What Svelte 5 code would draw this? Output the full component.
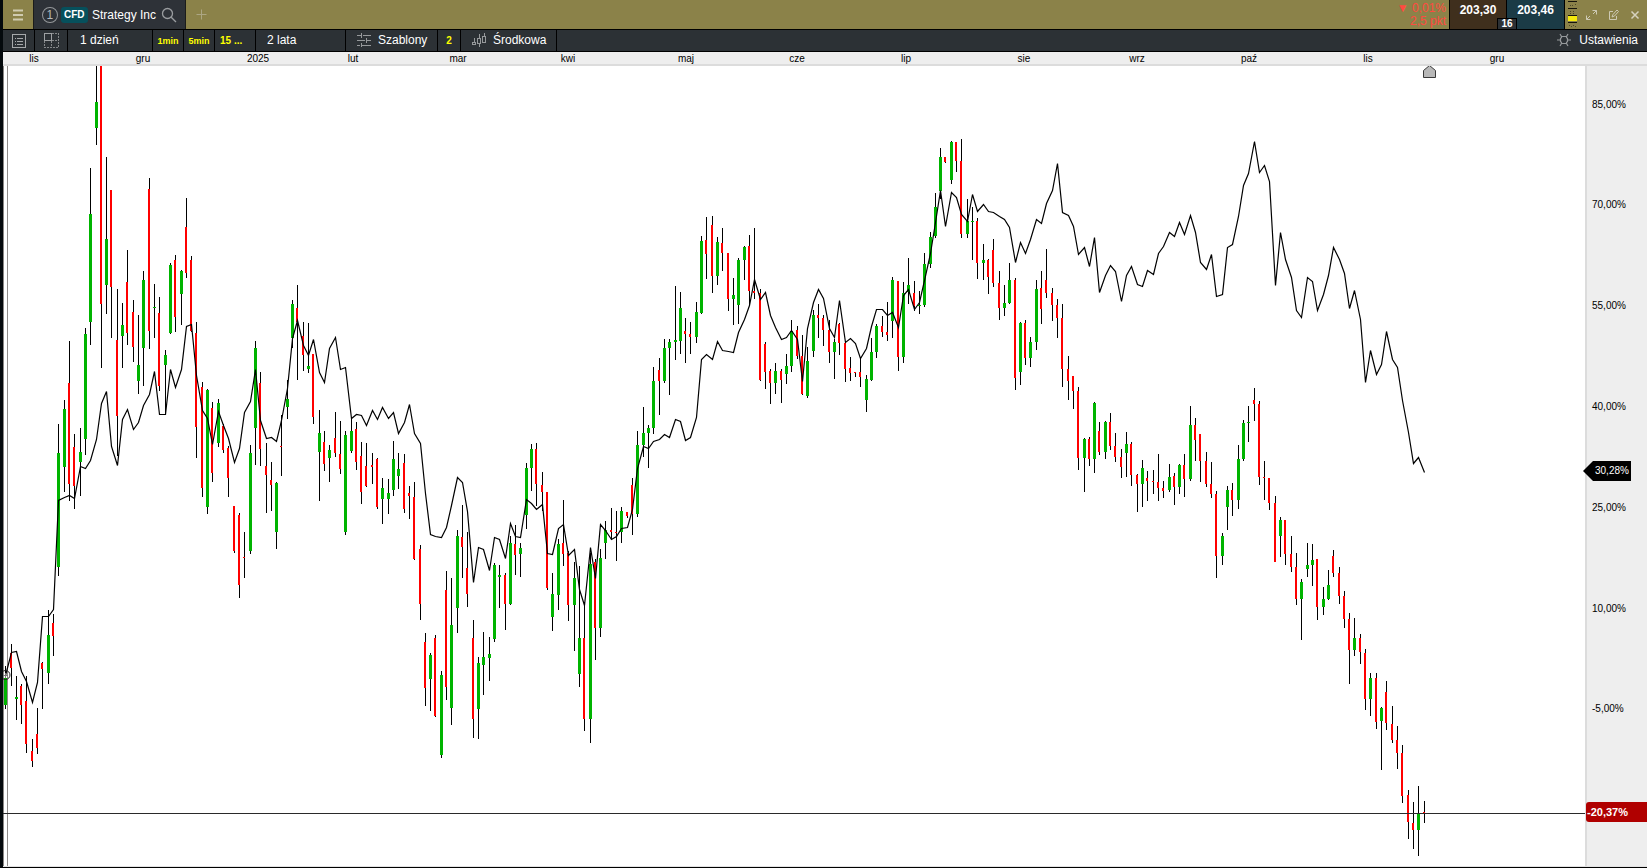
<script>
    // one row per session: high, low, body top, body bottom, rising, compare line
    const sessions = [
        [666, 709, 678, 705, 1, 675], [644, 686, 653, 668, 0, 652], [676, 720, 697, 699, 1, 651],
        [684, 724, 686, 705, 0, 671], [676, 753, 701, 744, 0, 681], [739, 767, 751, 761, 0, 702],
        [708, 754, 734, 748, 0, 682], [662, 709, 663, 669, 0, 616], [610, 684, 635, 673, 1, 616],
        [614, 656, 623, 636, 0, 609], [424, 576, 453, 567, 1, 500], [400, 492, 409, 467, 1, 497],
        [341, 501, 383, 484, 0, 495], [434, 509, 447, 486, 0, 498], [428, 496, 452, 462, 1, 466],
        [328, 455, 334, 439, 1, 468], [168, 345, 214, 322, 1, 460], [65, 145, 102, 128, 1, 439],
        [65, 368, 65, 304, 0, 403], [157, 314, 239, 285, 1, 391], [190, 338, 190, 287, 0, 446],
        [289, 456, 340, 416, 0, 465], [303, 368, 325, 336, 1, 419], [250, 345, 282, 333, 0, 409],
        [300, 362, 312, 347, 0, 429], [315, 394, 365, 381, 1, 422], [271, 386, 280, 348, 1, 405],
        [178, 349, 189, 331, 0, 394], [284, 338, 307, 308, 1, 371], [297, 391, 313, 386, 0, 414],
        [350, 414, 355, 365, 1, 414], [263, 334, 265, 333, 1, 369], [255, 332, 260, 317, 0, 387],
        [270, 325, 271, 294, 1, 369], [198, 278, 227, 273, 0, 326], [256, 332, 260, 331, 0, 324],
        [322, 458, 333, 427, 0, 375], [382, 497, 387, 488, 0, 410], [389, 514, 390, 507, 1, 418],
        [402, 482, 408, 473, 0, 444], [399, 447, 403, 443, 1, 411], [424, 453, 426, 450, 0, 425],
        [446, 497, 448, 478, 0, 438], [506, 553, 506, 551, 0, 462], [513, 598, 515, 585, 0, 448],
        [532, 578, 557, 558, 0, 412], [445, 554, 453, 551, 1, 401], [341, 465, 348, 428, 1, 369],
        [372, 466, 383, 449, 0, 420], [443, 513, 466, 475, 0, 438], [462, 511, 480, 485, 0, 437],
        [482, 549, 483, 532, 1, 441], [415, 476, 446, 447, 0, 420], [380, 419, 399, 407, 1, 388],
        [300, 348, 304, 338, 1, 338], [285, 380, 308, 322, 0, 320], [322, 371, 336, 355, 0, 345],
        [323, 373, 366, 369, 1, 355], [354, 424, 354, 417, 0, 339], [410, 501, 433, 452, 1, 372],
        [431, 471, 442, 464, 0, 382], [445, 482, 450, 458, 1, 348], [412, 457, 438, 453, 0, 337],
        [421, 474, 454, 469, 0, 369], [431, 535, 435, 532, 1, 367], [418, 453, 431, 451, 1, 418],
        [422, 470, 429, 462, 0, 414], [442, 504, 456, 492, 0, 415], [443, 487, 466, 486, 0, 425],
        [453, 484, 465, 467, 0, 410], [458, 509, 459, 507, 0, 419], [478, 524, 488, 499, 1, 407],
        [479, 514, 493, 499, 1, 418], [441, 496, 459, 490, 1, 412], [453, 489, 469, 476, 1, 433],
        [454, 513, 463, 509, 0, 422], [486, 519, 493, 496, 0, 404], [482, 560, 497, 559, 0, 433],
        [545, 620, 549, 604, 0, 443], [633, 706, 642, 688, 0, 493], [653, 711, 655, 679, 1, 534],
        [635, 717, 638, 716, 0, 536], [671, 758, 675, 755, 1, 537], [571, 700, 590, 687, 0, 527],
        [578, 725, 625, 708, 1, 505], [530, 633, 536, 608, 1, 477], [505, 578, 537, 547, 0, 482],
        [532, 607, 568, 594, 0, 511], [620, 738, 638, 719, 0, 582], [657, 739, 663, 709, 1, 547],
        [632, 695, 657, 665, 1, 549], [637, 681, 654, 658, 1, 570], [563, 642, 565, 639, 1, 537],
        [565, 608, 575, 577, 1, 539], [573, 630, 575, 604, 0, 558], [536, 605, 543, 604, 1, 523],
        [525, 575, 544, 555, 0, 536], [543, 577, 548, 554, 1, 537], [463, 529, 468, 515, 1, 499],
        [444, 491, 449, 468, 1, 503], [443, 506, 449, 484, 0, 509], [472, 511, 485, 492, 0, 504],
        [492, 590, 492, 588, 0, 553], [573, 631, 594, 617, 1, 554], [539, 610, 544, 595, 1, 528],
        [500, 566, 543, 554, 0, 524], [551, 621, 553, 605, 0, 555], [562, 651, 578, 605, 1, 549],
        [566, 687, 638, 674, 1, 589], [603, 731, 638, 719, 0, 605], [553, 743, 564, 719, 1, 547],
        [559, 660, 562, 628, 0, 578], [549, 637, 558, 628, 1, 524], [521, 559, 530, 543, 1, 530],
        [508, 540, 530, 532, 0, 539], [511, 561, 532, 533, 0, 536], [507, 543, 511, 532, 1, 528],
        [512, 518, 512, 516, 0, 527], [478, 535, 485, 514, 0, 509], [431, 517, 445, 514, 1, 468],
        [407, 457, 433, 445, 1, 446], [425, 468, 428, 433, 1, 448], [367, 434, 381, 428, 1, 441],
        [358, 415, 370, 381, 0, 439], [339, 383, 348, 381, 1, 434], [339, 395, 342, 348, 1, 437],
        [286, 360, 340, 342, 1, 419], [292, 354, 308, 341, 1, 421], [318, 363, 331, 334, 0, 440],
        [322, 354, 334, 337, 0, 437], [302, 343, 312, 337, 1, 417], [236, 314, 241, 313, 1, 359],
        [217, 279, 240, 254, 0, 354], [216, 293, 225, 276, 0, 359], [237, 285, 242, 276, 1, 341],
        [228, 271, 243, 253, 0, 350], [253, 311, 253, 299, 0, 351], [278, 325, 295, 299, 1, 352],
        [258, 324, 260, 305, 1, 332], [246, 280, 247, 260, 1, 319], [235, 306, 246, 291, 0, 305],
        [228, 299, 291, 293, 0, 279], [289, 381, 293, 380, 0, 299], [342, 389, 344, 372, 0, 292],
        [369, 404, 371, 383, 0, 315], [363, 394, 371, 383, 1, 327], [369, 403, 371, 380, 0, 339],
        [354, 384, 366, 374, 1, 337], [320, 372, 331, 366, 1, 330], [326, 359, 330, 356, 0, 339],
        [335, 395, 356, 394, 0, 381], [347, 398, 361, 396, 1, 328], [310, 357, 315, 351, 1, 302],
        [304, 338, 315, 318, 0, 289], [315, 346, 318, 330, 0, 298], [320, 363, 330, 352, 0, 328],
        [339, 379, 342, 352, 1, 337], [323, 355, 324, 343, 0, 300], [343, 382, 343, 369, 0, 342],
        [357, 381, 368, 373, 0, 338], [372, 377, 372, 373, 0, 343], [358, 387, 372, 377, 0, 358],
        [375, 412, 379, 400, 1, 348], [338, 381, 352, 380, 1, 326], [324, 358, 326, 352, 1, 309],
        [316, 337, 326, 332, 0, 309], [302, 341, 332, 335, 0, 315], [277, 338, 280, 321, 1, 312],
        [281, 371, 281, 357, 0, 327], [282, 363, 293, 357, 1, 295], [258, 304, 285, 292, 1, 289],
        [281, 311, 293, 306, 0, 309], [291, 314, 305, 306, 1, 302], [253, 307, 264, 305, 1, 280],
        [232, 268, 237, 264, 1, 253], [193, 238, 207, 236, 1, 222], [148, 199, 157, 191, 1, 190],
        [157, 163, 157, 162, 0, 226], [141, 184, 142, 180, 1, 192], [142, 172, 142, 161, 0, 197],
        [139, 238, 161, 234, 0, 214], [199, 238, 221, 234, 1, 221], [207, 260, 221, 222, 1, 194],
        [218, 279, 221, 263, 0, 211], [244, 280, 260, 263, 1, 204], [259, 294, 260, 277, 0, 211],
        [239, 287, 250, 283, 0, 212], [271, 320, 283, 308, 0, 216], [285, 316, 303, 308, 1, 219],
        [263, 304, 280, 303, 1, 227], [278, 390, 280, 378, 0, 262], [322, 385, 323, 372, 1, 242],
        [320, 365, 323, 358, 0, 253], [337, 367, 342, 358, 1, 239], [280, 350, 289, 342, 1, 219],
        [271, 324, 288, 309, 0, 223], [249, 298, 280, 293, 0, 203], [288, 321, 293, 305, 0, 190],
        [299, 338, 305, 318, 0, 163], [304, 387, 318, 369, 0, 212], [356, 400, 369, 381, 0, 215],
        [376, 409, 376, 391, 0, 226], [387, 470, 391, 458, 0, 254], [438, 492, 439, 458, 1, 247],
        [437, 466, 439, 459, 0, 266], [402, 473, 403, 459, 1, 237], [422, 455, 431, 452, 0, 292],
        [421, 459, 422, 452, 1, 275], [413, 450, 422, 446, 0, 265], [433, 462, 446, 457, 0, 271],
        [449, 478, 457, 467, 0, 301], [432, 477, 444, 453, 1, 275], [442, 486, 444, 475, 0, 266],
        [474, 512, 475, 484, 0, 284], [460, 507, 468, 484, 1, 286], [471, 501, 478, 481, 0, 270],
        [470, 494, 481, 482, 0, 274], [454, 501, 482, 488, 0, 253], [481, 498, 488, 491, 0, 246],
        [464, 492, 477, 490, 1, 232], [473, 505, 476, 487, 0, 236], [464, 494, 465, 487, 1, 222],
        [454, 497, 465, 479, 0, 234], [406, 481, 425, 479, 1, 215], [418, 461, 425, 440, 0, 232],
        [434, 482, 434, 461, 0, 262], [452, 487, 461, 484, 0, 269], [462, 498, 484, 494, 0, 254],
        [491, 578, 494, 556, 0, 296], [533, 565, 536, 556, 1, 294], [486, 530, 490, 507, 1, 247],
        [483, 516, 490, 500, 0, 244], [445, 509, 459, 500, 1, 216], [420, 461, 423, 459, 1, 185],
        [406, 442, 422, 423, 1, 173], [388, 421, 400, 404, 0, 141], [401, 485, 404, 477, 0, 172],
        [461, 500, 477, 478, 0, 165], [478, 510, 478, 503, 0, 181], [496, 562, 503, 562, 0, 285],
        [517, 557, 520, 536, 1, 232], [520, 565, 520, 554, 0, 259], [536, 572, 554, 567, 0, 277],
        [553, 605, 567, 599, 0, 310], [579, 640, 582, 599, 1, 317], [543, 577, 565, 569, 1, 277],
        [544, 586, 560, 565, 1, 281], [559, 620, 559, 607, 0, 310], [587, 615, 599, 607, 1, 294],
        [570, 600, 585, 599, 1, 275], [550, 577, 556, 573, 0, 247], [567, 604, 573, 596, 0, 259],
        [591, 628, 596, 619, 0, 273], [613, 684, 619, 650, 0, 308], [618, 656, 638, 650, 1, 290],
        [634, 664, 638, 652, 0, 319], [649, 710, 653, 699, 0, 382], [673, 716, 678, 699, 1, 350],
        [673, 729, 678, 722, 0, 374], [707, 770, 708, 721, 1, 364], [681, 730, 692, 723, 0, 331],
        [706, 743, 724, 740, 0, 359], [726, 769, 740, 753, 0, 367], [745, 803, 753, 796, 0, 400],
        [790, 839, 795, 822, 0, 432], [802, 849, 823, 830, 0, 463], [786, 856, 814, 830, 1, 457],
        [801, 823, 812, 814, 0, 472],
    ];

    const LEFT = 3;
    const TOP = 66;
    const PLOT_WIDTH = 1582;
    const PLOT_HEIGHT = 800;
    const AXIS_WIDTH = 1644;

    const months = [
        ["lis", 34], ["gru", 143], ["2025", 258], ["lut", 353], ["mar", 458],
        ["kwi", 568], ["maj", 686], ["cze", 797], ["lip", 906], ["sie", 1024],
        ["wrz", 1137], ["paź", 1249], ["lis", 1368], ["gru", 1497],
    ];

    const levels = [
        ["85,00%", 105], ["70,00%", 205], ["55,00%", 306], ["40,00%", 407],
        ["25,00%", 508], ["10,00%", 609], ["-5,00%", 709],
    ];

    let interval = $state("1 dzień");
    let range = $state("2 lata");

    const sessionX = (i) => Math.floor(5.725 + i * 5.312);
    const timePct = (x) => ((x - LEFT) / AXIS_WIDTH) * 100;
    const levelPct = (y) => ((y - TOP) / PLOT_HEIGHT) * 100;

    const compareLine = sessions
        .map((s, i) => `${sessionX(i) + 0.5},${s[5] + 0.5}`)
        .join(" ");
</script>

<div class="window">
    <header class="titlebar">
        <button class="menu" aria-label="Menu">
            <svg width="12" height="12" viewBox="0 0 12 12">
                <path d="M1 1.5h10M1 6h10M1 10.5h10" stroke="#d0cbb0" stroke-width="2" />
            </svg>
        </button>
        <div class="tab">
            <span class="tab-number">1</span>
            <span class="cfd">CFD</span>
            <span class="symbol">Strategy Inc</span>
            <button class="plain" aria-label="Szukaj">
                <svg width="16" height="16" viewBox="0 0 16 16" fill="none" stroke="#9a9da0" stroke-width="1.3">
                    <circle cx="6.5" cy="6.5" r="5" />
                    <path d="M10.2 10.2L15 15" />
                </svg>
            </button>
        </div>
        <button class="plain add" aria-label="Dodaj">
            <svg width="11" height="11" viewBox="0 0 11 11">
                <path d="M5.5 0.5v10M0.5 5.5h10" stroke="#aca683" />
            </svg>
        </button>
        <div class="change">
            <span>▼ 0,01%</span>
            <span>2,5 pkt</span>
        </div>
        <div class="quotes">
            <button class="quote sell">203,30</button>
            <button class="quote buy">203,46</button>
            <span class="spread">16</span>
        </div>
        <svg class="depth" width="13" height="29" viewBox="0 0 13 29" shape-rendering="crispEdges">
            <path d="M3 1.5h9M3 8.5h9M3 15.5h9M3 22.5h9" stroke="#15140c" />
            <rect x="3" y="16" width="9" height="5" fill="#f4e80c" />
            <path d="M5 5.5h1M7 5.5h1M10 4.5h1M5 11.5h1M8 11.5h1M5 13.5h1M8 13.5h1M4 25.5h1M6 26.5h1M8 25.5h1M10 26.5h1" stroke="#4c4829" />
        </svg>
        <div class="window-actions">
            <button class="plain" aria-label="Powiększ">
                <svg width="12" height="12" viewBox="0 0 12 12" fill="none" stroke="#cdc9b3">
                    <path d="M6.5 1.5h4v4M4.5 10.5h-4v-4M10.5 1.5L7 5M0.5 10.5L4 7" />
                </svg>
            </button>
            <button class="plain" aria-label="Otwórz w nowym oknie">
                <svg width="12" height="12" viewBox="0 0 12 12" fill="none" stroke="#cdc9b3">
                    <path d="M5 2.5H1.5v8h7V7M4 8l1-2.5L9 1l1.5 1.500L6.500 7z" />
                </svg>
            </button>
            <button class="plain" aria-label="Zamknij">
                <svg width="10" height="10" viewBox="0 0 10 10">
                    <path d="M1.5 1.5l7 7M8.5 1.5l-7 7" stroke="#d6d2be" stroke-width="1.5" />
                </svg>
            </button>
        </div>
    </header>

    <nav class="toolbar">
        <button class="cell icon-first" aria-label="Lista">
            <svg width="14" height="14" viewBox="0 0 14 14" fill="none" stroke="#a5a8aa" shape-rendering="crispEdges">
                <rect x="0.5" y="0.5" width="13" height="13" />
                <path d="M3 4.5h1M5 4.5h6M3 7.5h1M5 7.5h6M3 10.5h1M5 10.5h6" />
            </svg>
        </button>
        <button class="cell icon-cell" aria-label="Układ">
            <svg width="15" height="15" viewBox="0 0 15 15" fill="none" stroke="#85888a" shape-rendering="crispEdges">
                <rect x="0.5" y="0.5" width="7" height="7" stroke="#9ea1a3" />
                <path d="M8 0.5h7M14.5 0v15M0.5 8v7M0 14.5h15M7.5 8v7M8 7.5h7" stroke-dasharray="2 1" />
            </svg>
        </button>
        <select class="cell select-interval" aria-label="Interwał" bind:value={interval}>
            <option>1 dzień</option>
            <option>1 tydzień</option>
        </select>
        <button class="cell quick">1min</button>
        <button class="cell quick">5min</button>
        <button class="cell quick quick-more">15 ...</button>
        <select class="cell select-range" aria-label="Zakres" bind:value={range}>
            <option>2 lata</option>
            <option>5 lat</option>
        </select>
        <button class="cell templates">
            <svg width="14" height="14" viewBox="0 0 14 14" fill="none" stroke="#96999b" shape-rendering="crispEdges">
                <path d="M0 2.5h4M6 2.5h8M0 7.5h8M10 7.5h4M0 12.5h3M5 12.5h9M4.5 0v5M9.5 5v5M4.5 10v4" />
            </svg>
            Szablony
        </button>
        <button class="cell quick count">2</button>
        <button class="cell middle">
            <svg width="15" height="14" viewBox="0 0 15 14" fill="none" stroke="#96999b" shape-rendering="crispEdges">
                <path d="M2.5 5v4M7.5 1v4M7.5 11v3M12.5 0v3M12.5 9v1" />
                <rect x="0.5" y="9.5" width="3" height="2" />
                <rect x="5.5" y="5.5" width="3" height="5" />
                <rect x="10.5" y="3.5" width="3" height="6" />
            </svg>
            Środkowa
        </button>
        <button class="cell settings">
            <svg width="14" height="14" viewBox="0 0 14 14" fill="none" stroke="#96999b" stroke-width="1.2">
                <path d="M4.5 3.500h5v1l1 1v3l-1 1v1h-5v-1l-1-1v-3l1-1z" />
                <path d="M4.5 3.500L3 1M9.5 3.500L11 1M4.5 10.500L3 13M9.5 10.500L11 13M3.5 7H0M10.5 7H14" />
            </svg>
            Ustawienia
        </button>
    </nav>

    <svg class="time-axis" width="100%" height="12">
        {#each months as [name, x]}
            <text x="{timePct(x)}%" y="10" text-anchor="middle">{name}</text>
        {/each}
    </svg>

    <main class="chart">
        <svg
            class="plot"
            viewBox="{LEFT} {TOP} {PLOT_WIDTH} {PLOT_HEIGHT}"
            preserveAspectRatio="none"
        >
            <g shape-rendering="crispEdges">
                <rect x="3" y="66" width="1" height="800" fill="#8a8785" />
                <rect x="7" y="66" width="1" height="800" fill="#8f8b89" />
                {#each sessions as [high, low, top, bottom, rising], i}
                    <rect x={sessionX(i)} y={high} width="1" height={low - high} />
                    <rect
                        x={sessionX(i) - 1}
                        y={top}
                        width={rising ? 3 : 2}
                        height={bottom - top}
                        fill={rising ? "#00b400" : "#ff0000"}
                    />
                {/each}
                <rect x="3" y="813" width="1582" height="1" fill="#2a2a2a" />
            </g>
            <polyline points={compareLine} fill="none" stroke="#000" stroke-width="1.2" />
            <g fill="none" stroke="#222">
                <circle cx="5.5" cy="675" r="4.5" />
                <path d="M5.5 673v5M3 675.5h5" stroke="#777" />
            </g>
            <path d="M1423.5 77.5v-7l6-5 6 5v7z" fill="#b8b8b8" stroke="#3a3a3a" />
        </svg>
        <div class="price-axis">
            <svg class="levels">
                {#each levels as [label, y]}
                    <text x="5" y="{levelPct(y)}%" dy="3">{label}</text>
                {/each}
            </svg>
            <span class="tag compare" style="top: {levelPct(471)}%">30,28%</span>
            <span class="tag last" style="top: {levelPct(812)}%">-20,37%</span>
        </div>
    </main>
</div>

<style>
    :global(body) {
        margin: 0;
    }

    .window {
        display: flex;
        flex-direction: column;
        box-sizing: border-box;
        height: 100vh;
        border-left: 3px solid #04090c;
        border-bottom: 1px solid #000;
        background: #fff;
        font-family: "Liberation Sans", Arial, sans-serif;
        font-size: 12px;
        color: #fff;
    }

    button,
    select {
        margin: 0;
        padding: 0;
        border: none;
        border-radius: 0;
        background: none;
        font: inherit;
        color: inherit;
        cursor: pointer;
    }

    select {
        appearance: none;
    }

    svg {
        display: block;
        flex: none;
    }

    .titlebar {
        display: flex;
        height: 29px;
        background: #8b8249;
        border-bottom: 1px solid #000;
    }

    .menu {
        display: flex;
        align-items: center;
        justify-content: center;
        width: 30px;
    }

    .tab {
        display: flex;
        align-items: center;
        box-sizing: border-box;
        width: 153px;
        padding: 0 8px;
        background: #2e3238;
        border-left: 1px solid #1b1c1a;
        border-right: 1px solid #1b1c1a;
    }

    .tab-number {
        box-sizing: border-box;
        width: 16px;
        height: 16px;
        border: 1px solid #94979a;
        border-radius: 50%;
        line-height: 14px;
        text-align: center;
        color: #b5b8ba;
    }

    .cfd {
        width: 28px;
        height: 16px;
        margin: 0 4px 0 3px;
        border-radius: 3px;
        background: #06505c;
        font-size: 10px;
        font-weight: bold;
        line-height: 16px;
        text-align: center;
    }

    .symbol {
        margin-right: 5px;
        white-space: nowrap;
    }

    .plain {
        display: flex;
        align-items: center;
    }

    .add {
        margin-left: 10px;
    }

    .change {
        display: flex;
        flex-direction: column;
        justify-content: center;
        margin-left: auto;
        padding-right: 3px;
        color: #ff4a40;
        line-height: 13px;
        text-align: right;
    }

    .quotes {
        position: relative;
        display: flex;
        border-left: 1px solid #000;
        border-right: 1px solid #000;
    }

    .quote {
        width: 57px;
        padding-bottom: 10px;
        font-weight: bold;
    }

    .sell {
        background: #3f2f1d;
        border-right: 1px solid #000;
    }

    .buy {
        background: #1b3b46;
    }

    .spread {
        position: absolute;
        bottom: 0;
        left: 50%;
        width: 18px;
        margin-left: -10px;
        border: 1px solid #000;
        border-bottom: none;
        background: #2c3135;
        font-size: 10px;
        font-weight: bold;
        line-height: 10px;
        text-align: center;
    }

    .window-actions {
        display: flex;
        align-items: center;
        gap: 10px;
        padding: 0 7px 0 8px;
    }

    .toolbar {
        display: flex;
        height: 21px;
        background: #2c3135;
        border-bottom: 1px solid #000;
    }

    .cell {
        display: flex;
        align-items: center;
        box-sizing: border-box;
        border-right: 1px solid #000;
        white-space: nowrap;
        padding-bottom: 2px;
    }

    .icon-first {
        width: 32px;
        padding: 0 0 0 9px;
    }

    .icon-cell {
        width: 33px;
        padding: 0 0 0 9px;
    }

    .select-interval {
        width: 85px;
        padding-left: 12px;
    }

    .quick {
        justify-content: center;
        width: 31px;
        padding: 0;
        font-size: 9px;
        font-weight: bold;
        color: #ffff00;
    }

    .quick-more {
        justify-content: flex-start;
        width: 41px;
        padding-left: 5px;
        font-size: 10px;
    }

    .select-range {
        width: 90px;
        padding-left: 11px;
    }

    .templates {
        gap: 7px;
        width: 92px;
        padding-left: 11px;
    }

    .count {
        width: 23px;
        font-size: 10px;
    }

    .middle {
        gap: 6px;
        width: 96px;
        padding-left: 11px;
    }

    .settings {
        gap: 8px;
        margin-left: auto;
        padding-right: 9px;
        border-right: none;
    }

    .time-axis {
        background: #eee;
        border-bottom: 2px solid #dcdcdc;
    }

    .time-axis text,
    .levels text {
        font-size: 10px;
        fill: #000;
    }

    .chart {
        display: flex;
        flex: 1;
        min-height: 0;
        border-bottom: 1px solid #e2e2e2;
    }

    .plot {
        flex: 1;
        min-width: 0;
        height: 100%;
    }

    .price-axis {
        position: relative;
        width: 60px;
        border-left: 2px solid #dcdcdc;
        background: #eee;
    }

    .levels {
        width: 100%;
        height: 100%;
    }

    .tag {
        position: absolute;
        height: 20px;
        line-height: 20px;
        transform: translateY(-50%);
    }

    .compare {
        left: -4px;
        box-sizing: border-box;
        width: 48px;
        padding-left: 12px;
        background: #000;
        clip-path: polygon(0 50%, 10px 0, 100% 0, 100% 100%, 10px 100%);
        font-size: 10px;
    }

    .last {
        left: -1px;
        right: 0;
        padding-left: 1px;
        border-radius: 3px 0 0 3px;
        background: #b00000;
        font-size: 11px;
        font-weight: bold;
    }
</style>
